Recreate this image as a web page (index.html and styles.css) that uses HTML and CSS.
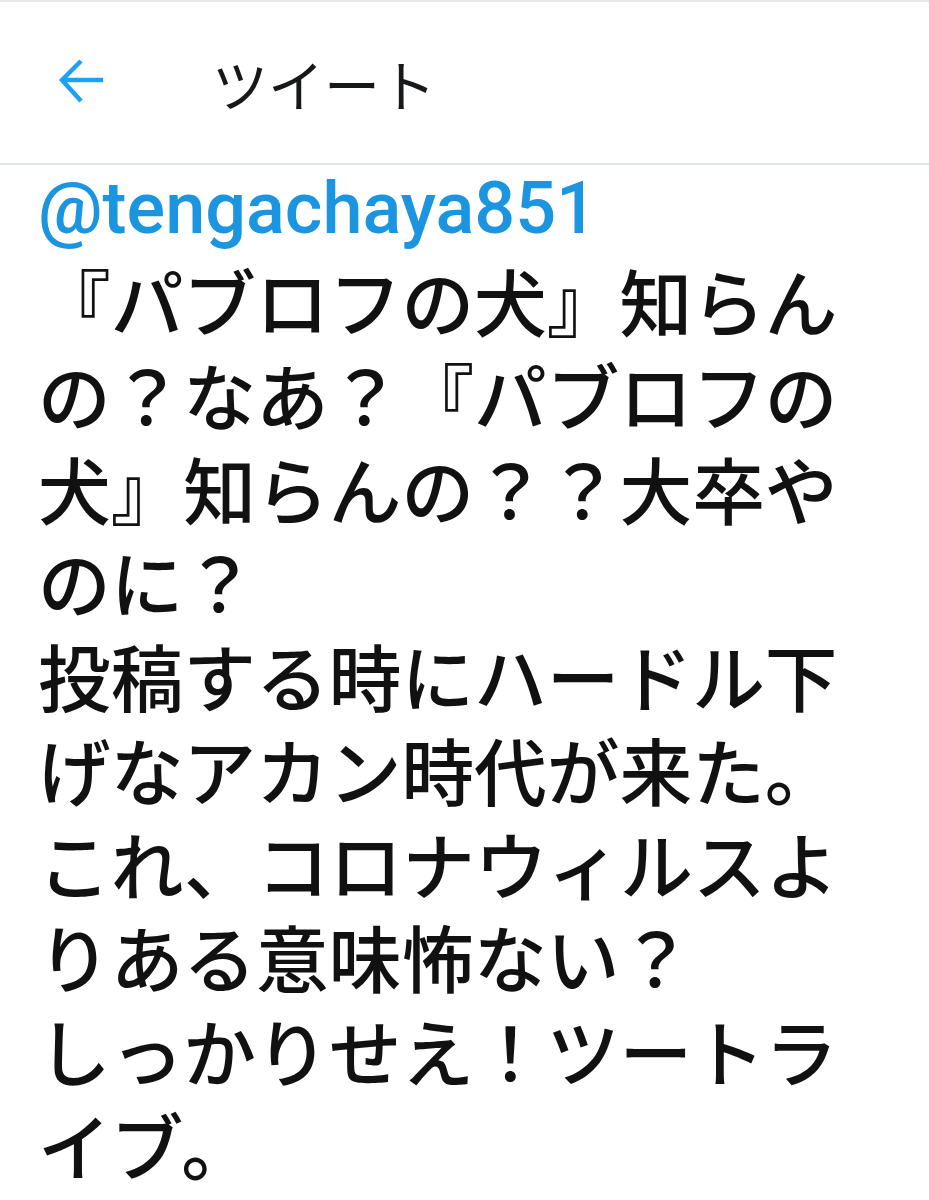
FILE: index.html
```html
<!DOCTYPE html>
<html lang="ja">
<head>
<meta charset="utf-8">
<title>ツイート</title>
<link rel="stylesheet" href="styles.css">
</head>
<body>
<div class="topstrip"></div>
<header class="header">
  <svg class="back" viewBox="0 0 48 48" width="48" height="48" aria-hidden="true">
    <path d="M45 22H6 M23 3L4 22L23 43" fill="none" stroke="#1da1f2" stroke-width="4.5" stroke-linecap="butt" stroke-linejoin="miter"/>
  </svg>
  <h1 class="title">ツイート</h1>
</header>
<main class="tweet">
  <div class="user">@tengachaya851</div>
  <p class="text">『パブロフの犬』知らんの？なあ？『パブロフの犬』知らんの？？大卒やのに？
投稿する時にハードル下げなアカン時代が来た。
これ、コロナウィルスよりある意味怖ない？
しっかりせえ！ツートライブ。</p>
</main>
</body>
</html>
```

FILE: styles.css
```css
html, body {
  margin: 0;
  padding: 0;
  background: #ffffff;
}
body {
  width: 929px;
  height: 1200px;
  overflow: hidden;
  font-family: "Noto Sans CJK JP", "Noto Sans", sans-serif;
  color: #14171a;
}
.topstrip {
  height: 2px;
  background: #e8e8e8;
}
.header {
  box-sizing: border-box;
  height: 163px;
  border-bottom: 2px solid #e1e4e6;
  display: flex;
  align-items: center;
  padding-left: 58px;
}
.back {
  display: block;
  margin-top: -2px;
}
.title {
  margin: 0 0 0 106px;
  font-size: 56px;
  font-weight: 400;
  line-height: 1;
  color: #16181a;
}
.tweet {
  padding-left: 38px;
}
.user {
  font-family: Roboto, "Noto Sans", sans-serif;
  font-size: 72px;
  font-weight: 500;
  color: #1b95e0;
  line-height: 1;
  margin-top: 8px;
  height: 80px;
}
.text {
  margin: 0;
  width: 820px;
  font-size: 72.7px;
  font-weight: 500;
  line-height: 93.75px;
  white-space: pre-wrap;
  color: #111111;
}
```
